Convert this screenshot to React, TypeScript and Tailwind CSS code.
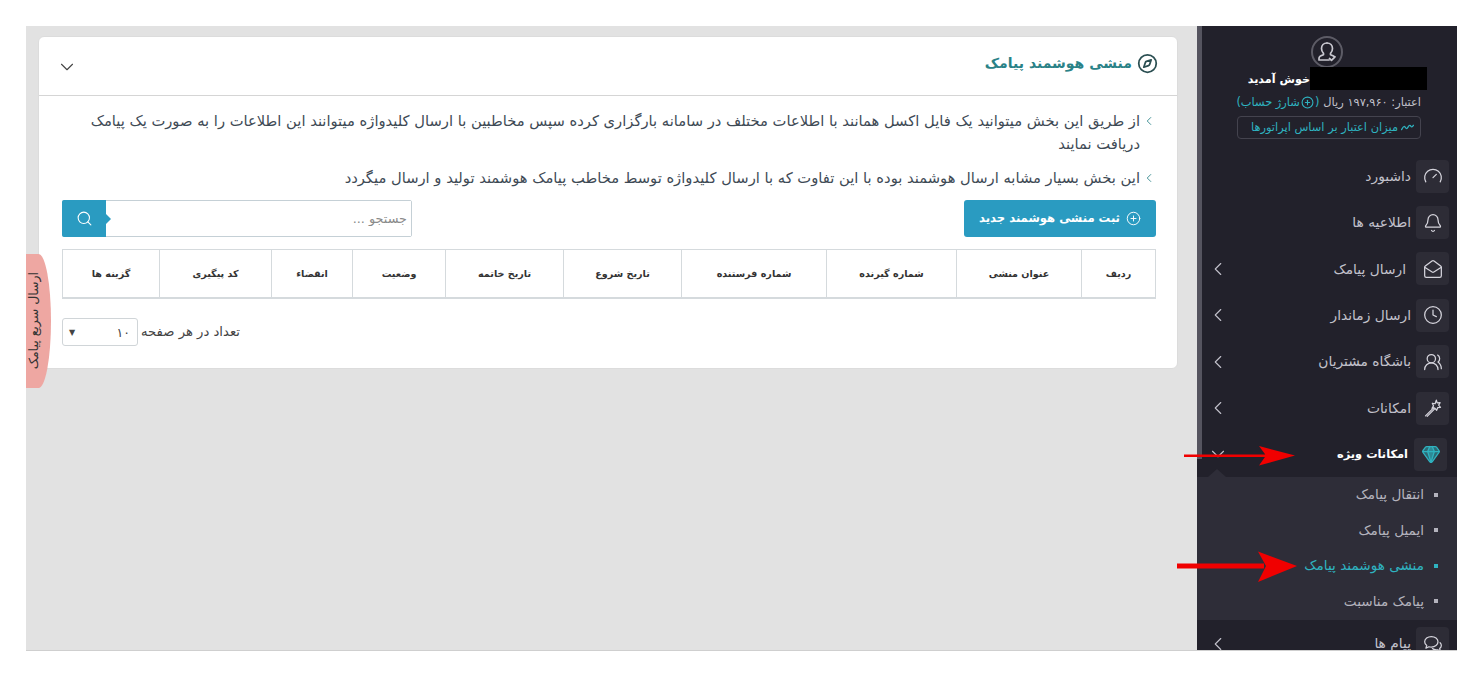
import {
  Bell,
  ChevronDown,
  ChevronLeft,
  CirclePlus,
  Clock,
  Compass,
  Gauge,
  Gem,
  MailOpen,
  Search,
  UsersRound,
} from "lucide-react";
import React from "react";

const columns = [
  { title: "ردیف", width: "w-[74px]" },
  { title: "عنوان منشی", width: "w-[125px]" },
  { title: "شماره گیرنده", width: "w-[130px]" },
  { title: "شماره فرستنده", width: "w-[145px]" },
  { title: "تاریخ شروع", width: "w-[118px]" },
  { title: "تاریخ خاتمه", width: "w-[118px]" },
  { title: "وضعیت", width: "w-[93px]" },
  { title: "انقضاء", width: "w-[81px]" },
  { title: "کد پیگیری", width: "w-[112px]" },
  { title: "گزینه ها", width: "flex-1" },
];

const subItems = [
  { title: "انتقال پیامک" },
  { title: "ایمیل پیامک" },
  { title: "منشی هوشمند پیامک", active: true },
  { title: "پیامک مناسبت" },
];

const iconClass = "h-[20px] w-[20px]";

// icons the package doesn't have in this shape
const AvatarIcon = () => (
  <svg viewBox="0 0 24 24" className="h-[24px] w-[24px]" fill="none" stroke="currentColor" strokeWidth="1.7" strokeLinecap="round" strokeLinejoin="round">
    <path d="M12 3c-3.300 0-5.500 2.400-5.500 5.600 0 2 .8 3.600 2 4.800v1.400c-2.200.7-4.500 1.500-4.500 3.400V20h10" />
    <path d="M12 3c3.300 0 5.500 2.400 5.500 5.600 0 2-.8 3.600-2 4.800v1.400c1.500.5 3 1 3.900 1.900" />
    <path d="M14.500 18.500l2 1.800 3.500-3.500" />
  </svg>
);

const WaveIcon = () => (
  <svg viewBox="0 0 24 24" className="ml-[3px] h-[13px] w-[13px]" fill="none" stroke="currentColor" strokeWidth="2.4" strokeLinecap="round" strokeLinejoin="round">
    <path d="M1 16c2-4 3.500-6 5-6s2.500 4 4.500 4 3-6 5.500-6 2 3 3.500 3 2.500-2 3.500-3" />
  </svg>
);

const WandIcon = () => (
  <svg viewBox="0 0 24 24" className={iconClass} fill="none" stroke="currentColor" strokeWidth="1.5" strokeLinecap="round" strokeLinejoin="round">
    <path d="M3 21.500L13 11.500M5 22l9-9" />
    <path d="M16 2.500l1 3.300 3.500-.3-1.700 3 2.200 2.700-3.400.4-1.200 3.200-2.200-2.700-3.400.2 1.800-2.900-1.400-3.100 3.300.6z" />
  </svg>
);

const ChatIcon = () => (
  <svg viewBox="0 0 24 24" className={iconClass} fill="none" stroke="currentColor" strokeWidth="1.5" strokeLinecap="round" strokeLinejoin="round">
    <path d="M10 3C5.600 3 2 5.700 2 9.200c0 1.800 1 3.400 2.500 4.500L3.500 17l3.700-1.700c.9.200 1.800.3 2.800.3 4.400 0 8-2.800 8-6.400S14.400 3 10 3z" />
    <path d="M20.500 10.500c1 .9 1.500 2 1.500 3.300 0 1.400-.8 2.700-2 3.600l.8 3-3.200-1.500c-2.300.4-4.700-.1-6.300-1.400" />
  </svg>
);

type MenuRowProps = {
  title: string;
  icon: React.ReactNode;
  arrow?: boolean;
  titleClass?: string;
};

const MenuRow = ({ title, icon, arrow, titleClass = "mr-[5px]" }: MenuRowProps) => (
  <div className="flex h-[46.4px] items-center pr-2 pl-[10px] text-[13.8px] text-[#c2c1cb]">
    <div className="flex h-[33px] w-[33px] items-center justify-center rounded bg-[#2d2c36] text-[#d5d4dc]">
      {icon}
    </div>
    <span className={`flex-1 whitespace-nowrap ${titleClass}`}>{title}</span>
    {arrow && <ChevronLeft className="h-[22px] w-[22px]" strokeWidth={1.2} />}
  </div>
);

const Sidebar = () => (
  <aside className="relative h-full w-[260px] shrink-0 overflow-hidden bg-[#22212b]">
    <div className="flex flex-col items-center pt-[10px]">
      <div className="flex h-8 w-8 items-center justify-center rounded-full border-2 border-[#5d5c66] text-[#c9c8d0]">
        <AvatarIcon />
      </div>
      <div className="-mt-[1px] mr-[30px] flex h-[23px] items-center self-start text-[11.2px] font-bold text-white">
        <div className="h-[23px] w-[117px] bg-black" />
        <span className="w-[63px] whitespace-nowrap pt-[4px]">خوش آمدید</span>
      </div>
      <div className="mt-[4px] mr-[36px] flex h-[18px] w-[184px] items-center self-start whitespace-nowrap text-[11.4px] text-[#c2c1cb]">
        <span>اعتبار: ۱۹۷,۹۶۰ ریال</span>
        <span className="mr-1 flex items-center text-[#2fb3c0]">
          (<CirclePlus className="mx-[1px] h-[13px] w-[13px]" />شارژ حساب)
        </span>
      </div>
      <div className="mt-[4px] mr-[36px] flex h-[23px] w-[184px] items-center self-start whitespace-nowrap rounded border border-[#44434e] px-[6px] text-[11.4px] text-[#2fb3c0]">
        <WaveIcon />
        میزان اعتبار بر اساس اپراتورها
      </div>
    </div>
    <div className="mt-[14px]">
      <MenuRow title="داشبورد" icon={<Gauge className={iconClass} strokeWidth={1.5} />} />
      <MenuRow title="اطلاعیه ها" icon={<Bell className={iconClass} strokeWidth={1.5} />} />
      <MenuRow title="ارسال پیامک" arrow titleClass="mr-[10px]" icon={<MailOpen className={iconClass} strokeWidth={1.5} />} />
      <MenuRow title="ارسال زماندار" arrow icon={<Clock className={iconClass} strokeWidth={1.5} />} />
      <MenuRow title="باشگاه مشتریان" arrow icon={<UsersRound className={iconClass} strokeWidth={1.5} />} />
      <MenuRow title="امکانات" arrow icon={<WandIcon />} />
      <div className="flex h-[46px] items-center pr-2 pl-[10px] text-[11.4px] font-bold text-white">
        <div className="mr-[2px] flex h-[33px] w-[33px] items-center justify-center rounded bg-[#2d2c36] text-[#2fb3c0]">
          <Gem className={iconClass} fill="#2fb3c0" fillOpacity={0.45} strokeWidth={1.5} />
        </div>
        <span className="mr-[6px] flex-1 whitespace-nowrap">امکانات ویژه</span>
        <ChevronDown className="h-[22px] w-[22px] text-[#c2c1cb]" strokeWidth={1.2} />
      </div>
      <div className="relative flex h-[143px] flex-col justify-center bg-[#2e2d38] pb-[2px] text-[13.6px] text-[#b4b3bd]">
        <div className="absolute -top-[8px] left-[11px] h-0 w-0 border-x-[9px] border-b-[8px] border-x-transparent border-b-[#2e2d38]" />
        {subItems.map((item) => (
          <div
            key={item.title}
            className={`flex h-[35.5px] shrink-0 items-center pr-[19px] ${item.active ? "text-[#2fb3c0]" : ""}`}
          >
            <span className={`ml-[10px] h-1 w-1 ${item.active ? "bg-[#2fb3c0]" : "bg-[#b4b3bd]"}`} />
            {item.title}
          </div>
        ))}
      </div>
      <MenuRow title="پیام ها" arrow icon={<ChatIcon />} />
    </div>
    {/* scrollbar thumb */}
    <div className="absolute top-0 left-0 h-[433px] w-[5px] bg-[#55545f]" />
  </aside>
);

const MainCard = () => (
  <section className="rounded-md border border-[#dcdcdc] bg-white">
    <header className="flex h-[59px] items-center justify-between border-b border-[#d5d5d5] pr-[19px] pl-[17px]">
      <h1 className="-mt-[5px] flex items-center text-[14px] font-bold text-[#2a8287]">
        <Compass className="ml-[5px] h-[21px] w-[21px] text-[#2b4f52]" strokeWidth={2} />
        منشی هوشمند پیامک
      </h1>
      <ChevronDown className="mt-[2px] h-[22px] w-[22px] text-[#444]" strokeWidth={1.2} />
    </header>
    <div className="pt-[13px] pr-[21px] pb-[22px] pl-[23px] text-[14.72px] leading-[23px] text-[#3e4a55]">
      <p className="flex">
        <ChevronLeft className="mt-[5px] ml-[2px] h-[14px] w-[14px] shrink-0 text-[#2a8287]" strokeWidth={1.5} />
        <span>
          از طریق این بخش میتوانید یک فایل اکسل همانند با اطلاعات مختلف در سامانه بارگزاری کرده سپس مخاطبین با ارسال کلیدواژه میتوانند این اطلاعات را به صورت یک پیامک دریافت نمایند
        </span>
      </p>
      <p className="mt-[11px] flex">
        <ChevronLeft className="mt-[5px] ml-[2px] h-[14px] w-[14px] shrink-0 text-[#2a8287]" strokeWidth={1.5} />
        <span>
          این بخش بسیار مشابه ارسال هوشمند بوده با این تفاوت که با ارسال کلیدواژه توسط مخاطب پیامک هوشمند تولید و ارسال میگردد
        </span>
      </p>
      <div className="mt-[11px] flex items-center justify-between">
        <button className="flex h-[37px] w-[192px] items-center justify-center rounded-[3px] bg-[#2a9bc1] text-[11.6px] font-bold text-white">
          <CirclePlus className="ml-[6px] h-[15px] w-[15px]" strokeWidth={1.5} />
          ثبت منشی هوشمند جدید
        </button>
        <div className="flex h-[37px] w-[350px] items-stretch rounded-[2px] border border-[#c5d0d6]">
          <input
            className="min-w-0 flex-1 bg-white px-[4px] text-[12.8px] outline-none placeholder:text-[#8a8a8a]"
            placeholder="جستجو ..."
          />
          <div className="relative -m-[1px] flex w-[44px] items-center justify-center rounded-l-[2px] bg-[#2a9bc1] text-white">
            <Search className="h-[17px] w-[17px]" strokeWidth={1.5} />
            <span className="absolute top-1/2 -right-[5px] h-0 w-0 -translate-y-1/2 border-y-[5px] border-l-[5px] border-y-transparent border-l-[#2a9bc1]" />
          </div>
        </div>
      </div>
      <div className="mt-[12px] flex h-[50px] border border-b-2 border-[#d5dadd] text-[9.6px] font-bold text-[#333]">
        {columns.map((col, i) => (
          <div
            key={col.title}
            className={`flex items-center justify-center ${col.width} ${i < columns.length - 1 ? "border-l border-[#d5dadd]" : ""}`}
          >
            {col.title}
          </div>
        ))}
      </div>
      <div className="mt-[19px] flex items-center justify-end text-[13.2px] text-[#444]">
        <span className="-mt-[2px] ml-[3px]">تعداد در هر صفحه</span>
        <div className="flex h-[28px] w-[76px] items-center justify-between rounded-[3px] border border-[#d0d5d8] px-[6px] text-[12.5px]">
          <span className="pr-[1px]">۱۰</span>
          <span className="text-[8px]">▼</span>
        </div>
      </div>
    </div>
  </section>
);

const App = () => {
  return (
    <div dir="rtl" className="relative h-[677px] w-full overflow-hidden bg-white pt-[26px] pr-[26px] pl-[26px] font-['DejaVu_Sans',sans-serif]">
      <div className="relative flex h-[625px] border-b border-b-[#cfcfcf]">
        <Sidebar />
        <main className="min-w-0 flex-1 bg-[#e2e2e2] pt-[10px] pr-[19px] pl-[12px]">
          <MainCard />
        </main>
        <div className="absolute top-[228px] left-0 flex h-[134px] w-[25px] items-center justify-end rounded-r-[50%] bg-[#eea7a2]">
          <span className="w-[15px] rotate-180 whitespace-nowrap text-[12.5px] leading-[15px] text-[#333] [writing-mode:vertical-rl]">
            ارسال سریع پیامک
          </span>
        </div>
      </div>

      {/* red annotation arrows */}
      <svg className="absolute top-0 left-0" width="1483" height="677" viewBox="0 0 1483 677">
        <path d="M1184 454.500H1266V457H1184Z M1259 446L1295 455.500L1259 465.500L1266 455.500Z" fill="#f00000" />
        <path d="M1177 563.500H1264V568.500H1177Z M1258 551.500L1297 566L1258 582L1266 566Z" fill="#f00000" />
      </svg>
    </div>
  );
};

export default App;
